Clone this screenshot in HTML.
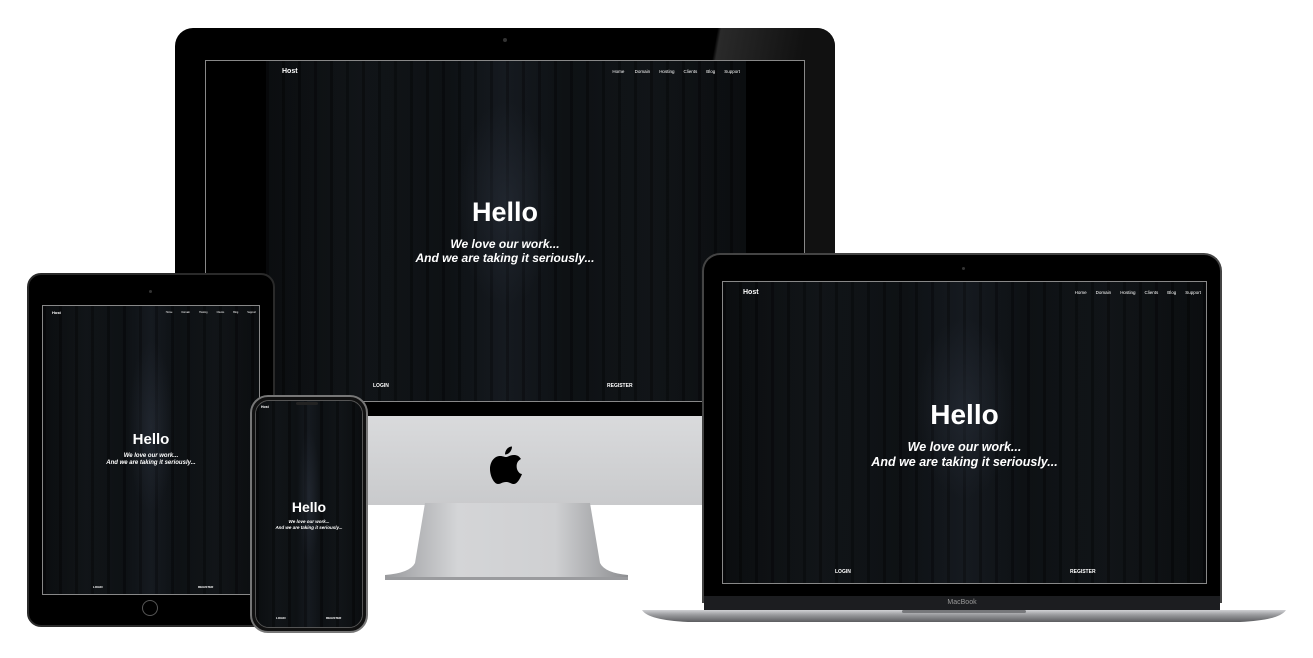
<!DOCTYPE html>
<html><head><meta charset="utf-8"><style>
*{margin:0;padding:0;box-sizing:border-box}
body{width:1313px;height:658px;background:#fff;position:relative;overflow:hidden;font-family:"Liberation Sans",sans-serif;color:#fff}
.a{position:absolute}
.site{position:absolute;overflow:hidden;background:
 radial-gradient(ellipse 14% 40% at 50% 42%,rgba(45,52,64,.45),transparent 75%),
 repeating-linear-gradient(90deg,rgba(0,0,0,.25) 0 3px,rgba(25,32,36,.12) 3px 16px),
 linear-gradient(90deg,#090b0d 0%,#101316 20%,#0c0f12 38%,#15191f 50%,#0c0f12 62%,#101316 80%,#090b0d 100%);}
.c{position:absolute;left:0;right:0;text-align:center;font-weight:bold}
.i{font-style:italic}
.nav span{margin-left:9px}
</style></head><body>

<!-- iMac -->
<div class="a" style="left:368px;top:400px;width:340px;height:105px;background:linear-gradient(#dcdddf,#c9cacc)"></div>
<svg class="a" style="left:490px;top:446px" width="32" height="38" viewBox="0 0 32 38"><path d="M22 0.5C22 4.5 19 8.5 15 8.5C15 4.5 18 0.5 22 0.5Z" fill="#000"/><path d="M16 11C18 11 20 9 24 9C27 9 29 10 31 13C27 15 26 19 27 23C28 26 30 28 32 28C30 33 27 38 24 38C21 38 20 36 16 36C12 36 11 38 8 38C4 38 0 30 0 23C0 15 5 10 10 10C13 10 14 11 16 11Z" fill="#000"/></svg>
<svg class="a" style="left:380px;top:503px" width="255" height="82"><defs><linearGradient id="st" x1="0" x2="1"><stop offset="0" stop-color="#9a9b9e"/><stop offset=".3" stop-color="#d4d5d7"/><stop offset=".7" stop-color="#cfd0d2"/><stop offset="1" stop-color="#8d8e91"/></linearGradient></defs><path d="M45 0 H210 L220 60 Q225 70 248 72 V77 H5 V72 Q30 70 35 60 Z" fill="url(#st)"/><rect x="5" y="74" width="243" height="3" fill="#9a9b9e"/></svg>
<div class="a" style="left:175px;top:28px;width:660px;height:388px;background:#000;border-radius:18px 18px 0 0"></div>
<div class="a" style="left:700px;top:28px;width:135px;height:240px;background:linear-gradient(100deg,transparent 0 10%,#2a2a2a 12%,#111 60%);border-radius:0 18px 0 0"></div>
<div class="a" style="left:503px;top:38px;width:4px;height:4px;border-radius:50%;background:#333"></div>
<div class="a" style="left:205px;top:60px;width:600px;height:342px;border:1px solid #888;background:#000">
 <div class="site" style="left:60px;top:0;width:480px;height:340px"></div>
 <div class="a" style="left:76px;top:7px;font-size:7px;font-weight:bold">Host</div>
 <div class="a nav" style="right:64px;top:8px;font-size:4.5px">Home <span>Domain</span><span>Hosting</span><span>Clients</span><span>Blog</span><span>Support</span></div>
 <div class="c" style="top:136px;font-size:27px">Hello</div>
 <div class="c i" style="top:176px;font-size:12px;line-height:14px">We love our work...<br>And we are taking it seriously...</div>
 <div class="a" style="left:167px;top:322px;font-size:5px;font-weight:bold">LOGIN</div>
 <div class="a" style="left:401px;top:322px;font-size:5px;font-weight:bold">REGISTER</div>
</div>

<!-- iPad -->
<div class="a" style="left:27px;top:273px;width:248px;height:354px;background:#000;border-radius:14px;border:2px solid #2a2a2a"></div>
<div class="a" style="left:149px;top:290px;width:3px;height:3px;border-radius:50%;background:#333"></div>
<div class="a" style="left:142px;top:600px;width:16px;height:16px;border-radius:50%;border:1px solid #555"></div>
<div class="a" style="left:42px;top:305px;width:218px;height:290px;border:1px solid #888;overflow:hidden">
 <div class="site" style="left:0;top:0;width:216px;height:288px"></div>
 <div class="a" style="left:9px;top:4px;font-size:4px;font-weight:bold">Host</div>
 <div class="a nav" style="right:3px;top:5px;font-size:2.5px">Home<span>Domain</span><span>Hosting</span><span>Clients</span><span>Blog</span><span>Support</span></div>
 <div class="c" style="top:125px;font-size:15px">Hello</div>
 <div class="c i" style="top:147px;font-size:6px;line-height:7px">We love our work...<br>And we are taking it seriously...</div>
 <div class="a" style="left:50px;top:279px;font-size:3px;font-weight:bold">LOGIN</div>
 <div class="a" style="left:155px;top:279px;font-size:3px;font-weight:bold">REGISTER</div>
</div>

<!-- iPhone -->
<div class="a" style="left:250px;top:395px;width:118px;height:238px;background:#111;border-radius:18px;border:2px solid #777"></div>
<div class="a" style="left:255px;top:400px;width:108px;height:228px;border-radius:14px;overflow:hidden;border:1px solid #555">
 <div class="site" style="left:0;top:0;width:106px;height:226px"></div>
 <div class="a" style="left:5px;top:4px;font-size:3.5px;font-weight:bold">Host</div>
 <div class="c" style="top:98px;font-size:14px">Hello</div>
 <div class="c i" style="top:118px;font-size:4.5px;line-height:6px">We love our work...<br>And we are taking it seriously...</div>
 <div class="a" style="left:20px;top:215px;font-size:3px;font-weight:bold">LOGIN</div>
 <div class="a" style="left:70px;top:215px;font-size:3px;font-weight:bold">REGISTER</div>
</div>
<div class="a" style="left:296px;top:402px;width:22px;height:3px;background:#222;border-radius:2px"></div>

<!-- MacBook -->
<div class="a" style="left:702px;top:253px;width:520px;height:350px;background:#000;border-radius:18px 18px 0 0;border:2px solid #444;border-bottom:none"></div>
<div class="a" style="left:962px;top:267px;width:3px;height:3px;border-radius:50%;background:#333"></div>
<div class="a" style="left:722px;top:281px;width:485px;height:303px;border:1px solid #888;overflow:hidden">
 <div class="site" style="left:0;top:0;width:483px;height:301px"></div>
 <div class="a" style="left:20px;top:7px;font-size:7px;font-weight:bold">Host</div>
 <div class="a nav" style="right:5px;top:8px;font-size:4.5px">Home<span>Domain</span><span>Hosting</span><span>Clients</span><span>Blog</span><span>Support</span></div>
 <div class="c" style="top:117px;font-size:28px">Hello</div>
 <div class="c i" style="top:158px;font-size:12.5px;line-height:15px">We love our work...<br>And we are taking it seriously...</div>
 <div class="a" style="left:112px;top:287px;font-size:5px;font-weight:bold">LOGIN</div>
 <div class="a" style="left:347px;top:287px;font-size:5px;font-weight:bold">REGISTER</div>
</div>
<div class="a" style="left:704px;top:596px;width:516px;height:14px;background:#1c1d20;text-align:center;font-size:7px;color:#999;line-height:14px">MacBook</div>
<svg class="a" style="left:640px;top:608px" width="648" height="16"><defs><linearGradient id="mb" x1="0" y1="0" x2="0" y2="1"><stop offset="0" stop-color="#cfd0d3"/><stop offset=".4" stop-color="#9a9b9e"/><stop offset="1" stop-color="#5c5d60"/></linearGradient></defs><path d="M2 2 H646 Q640 12 600 14 H48 Q8 12 2 2Z" fill="url(#mb)"/><rect x="262" y="2" width="124" height="3" rx="1.5" fill="#77787b"/></svg>

</body></html>
